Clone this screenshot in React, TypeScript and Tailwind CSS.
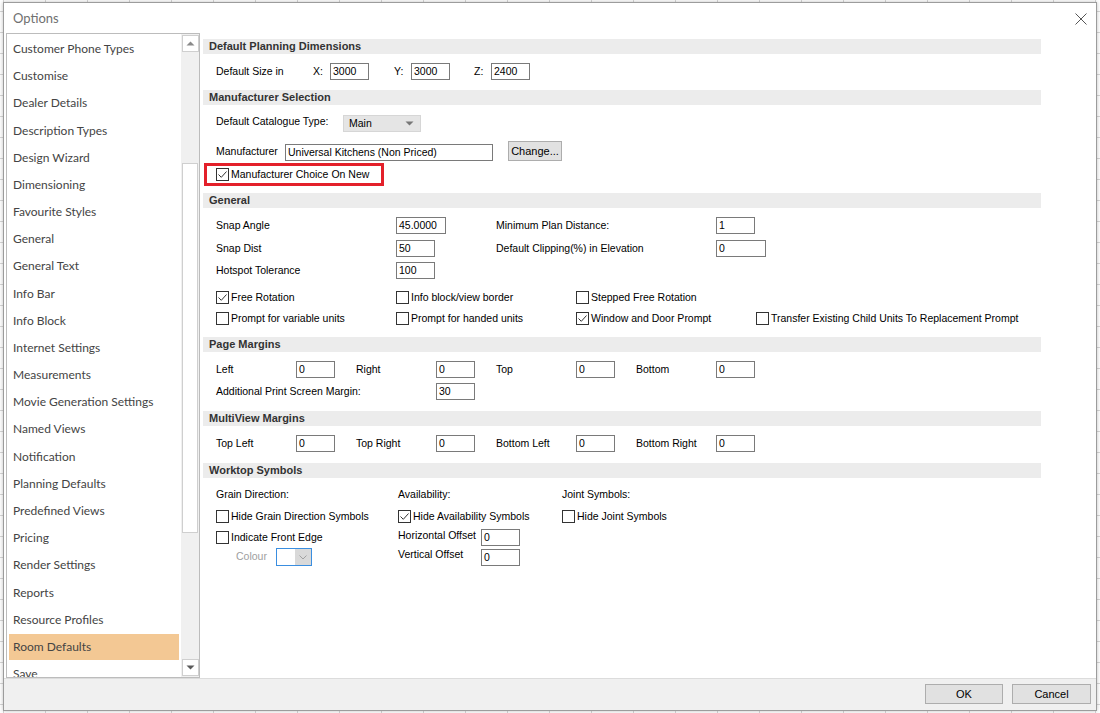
import React from "react";

const listItems = [
  "Customer Phone Types",
  "Customise",
  "Dealer Details",
  "Description Types",
  "Design Wizard",
  "Dimensioning",
  "Favourite Styles",
  "General",
  "General Text",
  "Info Bar",
  "Info Block",
  "Internet Settings",
  "Measurements",
  "Movie Generation Settings",
  "Named Views",
  "Notification",
  "Planning Defaults",
  "Predefined Views",
  "Pricing",
  "Render Settings",
  "Reports",
  "Resource Profiles",
  "Room Defaults",
  "Save",
];

function Check({ checked }: { checked?: boolean }) {
  return (
    <span className="flex h-[13px] w-[13px] shrink-0 items-center justify-center border border-[#333] bg-white">
      {checked && (
        <svg width="11" height="11" viewBox="0 0 11 11">
          <path d="M1.5 5.5 L4.3 8.3 L9.5 2.5" fill="none" stroke="#333" strokeWidth="1" />
        </svg>
      )}
    </span>
  );
}

function CheckItem({ label, checked, w }: { label: string; checked?: boolean; w?: string }) {
  return (
    <div className={`flex items-center gap-[2px] ${w ?? ""}`}>
      <Check checked={checked} />
      <span className="whitespace-nowrap">{label}</span>
    </div>
  );
}

function Field({ value, w }: { value: string; w: string }) {
  return (
    <div className={`h-[17px] shrink-0 border border-[#7a7a7a] bg-white pl-[2px] leading-[15px] text-black ${w}`}>
      {value}
    </div>
  );
}

function Header({ title, mt }: { title: string; mt: string }) {
  return (
    <div
      className={`ml-[3px] h-[15px] w-[838px] bg-[#ececec] pl-[6px] text-[11px] font-bold leading-[15px] text-[#333] ${mt}`}
    >
      {title}
    </div>
  );
}

function Button({ label, w }: { label: string; w: string }) {
  return (
    <div
      className={`flex h-[20px] items-center justify-center border border-[#adadad] bg-[#e1e1e1] text-[11px] text-black ${w}`}
    >
      {label}
    </div>
  );
}

function Scrollbar() {
  return (
    <div className="flex w-[18px] flex-col bg-[#f0f0f0] px-[1px] pt-[1px] pb-[1px]">
      <div className="flex h-[17px] w-[17px] items-center justify-center border border-[#cfcfcf] bg-white">
        <svg width="9" height="5" viewBox="0 0 9 5">
          <path d="M0.5 4.5 L4.5 0.5 L8.5 4.5 Z" fill="#8a8a8a" />
        </svg>
      </div>
      <div className="mt-[111px] h-[370px] w-[16px] border border-[#cfcfcf] bg-white" />
      <div className="flex-1" />
      <div className="flex h-[17px] w-[17px] items-center justify-center border border-[#cfcfcf] bg-white">
        <svg width="9" height="5" viewBox="0 0 9 5">
          <path d="M0.5 0.5 L4.5 4.5 L8.5 0.5 Z" fill="#5a5a5a" />
        </svg>
      </div>
    </div>
  );
}

function Row({ mt, children, h = "h-[17px]" }: { mt: string; children: React.ReactNode; h?: string }) {
  return <div className={`flex items-center pl-[16px] ${h} ${mt}`}>{children}</div>;
}

export default function App() {
  return (
    <div className="h-[713px] w-[1100px] overflow-hidden bg-white bg-[linear-gradient(to_right,#d6d6d6_1px,transparent_1px),linear-gradient(to_bottom,#d6d6d6_1px,transparent_1px)] bg-[size:42px_21px] bg-[position:3px_11px] pt-[2px] pl-[3px]">
      <div className="flex h-[709px] w-[1094px] flex-col border border-[#9c9c9c] bg-white shadow-[0_0_4px_rgba(0,0,0,0.25)]">
        {/* title bar */}
        <div className="flex h-[30px] items-center justify-between pl-[9px] pr-[9px] pt-[1px]">
          <span className="font-['Lato',sans-serif] text-[13px] text-[#707070]">Options</span>
          <svg width="12" height="12" viewBox="0 0 12 12">
            <path d="M0.5 0.5 L11.5 11.5 M11.5 0.5 L0.5 11.5" stroke="#555" strokeWidth="1" />
          </svg>
        </div>

        <div className="flex flex-1 overflow-hidden">
          {/* list */}
          <div className="ml-[2px] flex h-[645px] w-[194px] border border-[#bcbcbc]">
            <div className="flex-1 overflow-hidden pt-[1.5px] font-['Lato',sans-serif] text-[12px] text-[#444]">
              {listItems.map((item) => (
                <div key={item} className="flex h-[27.18px] items-center px-[2px]">
                  <div
                    className={`flex h-[26px] w-full items-center pl-[4px] ${
                      item === "Room Defaults" ? "bg-[#f3c894]" : ""
                    }`}
                  >
                    {item}
                  </div>
                </div>
              ))}
            </div>
            <Scrollbar />
          </div>

          {/* settings panel */}
          <div className="flex flex-1 flex-col font-['Liberation_Sans',Arial,sans-serif] text-[10.5px] text-black">
            <Header title="Default Planning Dimensions" mt="mt-[6px]" />
            <Row mt="mt-[9px]">
              <span className="w-[97px]">Default Size in</span>
              <span className="w-[17px]">X:</span>
              <Field value="3000" w="w-[39px]" />
              <span className="ml-[25px] w-[17px]">Y:</span>
              <Field value="3000" w="w-[39px]" />
              <span className="ml-[24px] w-[17px]">Z:</span>
              <Field value="2400" w="w-[39px]" />
            </Row>

            <Header title="Manufacturer Selection" mt="mt-[10px]" />
            <Row mt="mt-[10px]">
              <span className="w-[127px] self-start leading-[13px]">Default Catalogue Type:</span>
              <div className="flex h-[17px] w-[78px] items-center justify-between border border-[#d6d6d6] bg-[#e5e5e5] pl-[5px] pr-[6px]">
                <span>Main</span>
                <svg width="9" height="5" viewBox="0 0 9 5">
                  <path d="M0.5 0.5 L4.5 4.5 L8.5 0.5 Z" fill="#777" />
                </svg>
              </div>
            </Row>
            <Row mt="mt-[9px]" h="h-[20px]">
              <span className="w-[69px] self-start pt-[3px]">Manufacturer</span>
              <div className="mt-[3px]">
                <Field value="Universal Kitchens (Non Priced)" w="w-[208px]" />
              </div>
              <div className="ml-[15px]">
                <Button label="Change..." w="w-[54px]" />
              </div>
            </Row>
            <div className="ml-[4px] mt-[2px] flex h-[23px] w-[180px] items-center border-[3px] border-[#e3202a] pl-[9px]">
              <CheckItem label="Manufacturer Choice On New" checked />
            </div>

            <Header title="General" mt="mt-[7px]" />
            <Row mt="mt-[9px]">
              <span className="w-[180px]">Snap Angle</span>
              <div className="w-[100px]">
                <Field value="45.0000" w="w-[50px]" />
              </div>
              <span className="w-[220px]">Minimum Plan Distance:</span>
              <Field value="1" w="w-[39px]" />
            </Row>
            <Row mt="mt-[6px]">
              <span className="w-[180px]">Snap Dist</span>
              <div className="w-[100px]">
                <Field value="50" w="w-[39px]" />
              </div>
              <span className="w-[220px]">Default Clipping(%) in Elevation</span>
              <Field value="0" w="w-[50px]" />
            </Row>
            <Row mt="mt-[5px]">
              <span className="w-[180px]">Hotspot Tolerance</span>
              <Field value="100" w="w-[39px]" />
            </Row>
            <Row mt="mt-[10px]">
              <CheckItem label="Free Rotation" checked w="w-[180px]" />
              <CheckItem label="Info block/view border" w="w-[180px]" />
              <CheckItem label="Stepped Free Rotation" w="w-[180px]" />
            </Row>
            <Row mt="mt-[4px]">
              <CheckItem label="Prompt for variable units" w="w-[180px]" />
              <CheckItem label="Prompt for handed units" w="w-[180px]" />
              <CheckItem label="Window and Door Prompt" checked w="w-[180px]" />
              <CheckItem label="Transfer Existing Child Units To Replacement Prompt" />
            </Row>

            <Header title="Page Margins" mt="mt-[10px]" />
            <Row mt="mt-[9px]">
              <span className="w-[80px]">Left</span>
              <div className="w-[60px]">
                <Field value="0" w="w-[39px]" />
              </div>
              <span className="w-[80px]">Right</span>
              <div className="w-[60px]">
                <Field value="0" w="w-[39px]" />
              </div>
              <span className="w-[80px]">Top</span>
              <div className="w-[60px]">
                <Field value="0" w="w-[39px]" />
              </div>
              <span className="w-[80px]">Bottom</span>
              <Field value="0" w="w-[39px]" />
            </Row>
            <Row mt="mt-[5px]">
              <span className="w-[220px]">Additional Print Screen Margin:</span>
              <Field value="30" w="w-[39px]" />
            </Row>

            <Header title="MultiView Margins" mt="mt-[11px]" />
            <Row mt="mt-[9px]">
              <span className="w-[80px]">Top Left</span>
              <div className="w-[60px]">
                <Field value="0" w="w-[39px]" />
              </div>
              <span className="w-[80px]">Top Right</span>
              <div className="w-[60px]">
                <Field value="0" w="w-[39px]" />
              </div>
              <span className="w-[80px]">Bottom Left</span>
              <div className="w-[60px]">
                <Field value="0" w="w-[39px]" />
              </div>
              <span className="w-[80px]">Bottom Right</span>
              <Field value="0" w="w-[39px]" />
            </Row>

            <Header title="Worktop Symbols" mt="mt-[11px]" />
            <Row mt="mt-[8px]">
              <span className="w-[182px]">Grain Direction:</span>
              <span className="w-[164px]">Availability:</span>
              <span>Joint Symbols:</span>
            </Row>
            <Row mt="mt-[5px]">
              <CheckItem label="Hide Grain Direction Symbols" w="w-[182px]" />
              <CheckItem label="Hide Availability Symbols" checked w="w-[164px]" />
              <CheckItem label="Hide Joint Symbols" />
            </Row>
            <Row mt="mt-[4px]">
              <CheckItem label="Indicate Front Edge" w="w-[182px]" />
              <span className="w-[83px] self-start leading-[13px]">Horizontal Offset</span>
              <Field value="0" w="w-[39px]" />
            </Row>
            <Row mt="mt-[2px]" h="h-[18px]">
              <div className="flex w-[182px] items-center pl-[20px]">
                <span className="w-[40px] text-[#a0a0a0]">Colour</span>
                <div className="flex h-[18px] w-[36px] border border-[#3a8ee0]">
                  <div className="flex-1 bg-white" />
                  <div className="flex w-[16px] items-center justify-center bg-[#d9d9d9]">
                    <svg width="8" height="5" viewBox="0 0 8 5">
                      <path d="M0.5 0.5 L4 4 L7.5 0.5" fill="none" stroke="#a0a0a0" strokeWidth="1" />
                    </svg>
                  </div>
                </div>
              </div>
              <span className="w-[83px] self-start leading-[13px]">Vertical Offset</span>
              <Field value="0" w="w-[39px]" />
            </Row>
          </div>
        </div>

        {/* footer */}
        <div className="flex h-[32px] justify-end gap-[9px] border-t border-[#dcdcdc] bg-[#f0f0f0] pr-[5px] pt-[5px] font-['Liberation_Sans',Arial,sans-serif]">
          <Button label="OK" w="w-[78px]" />
          <Button label="Cancel" w="w-[79px]" />
        </div>
      </div>
    </div>
  );
}
